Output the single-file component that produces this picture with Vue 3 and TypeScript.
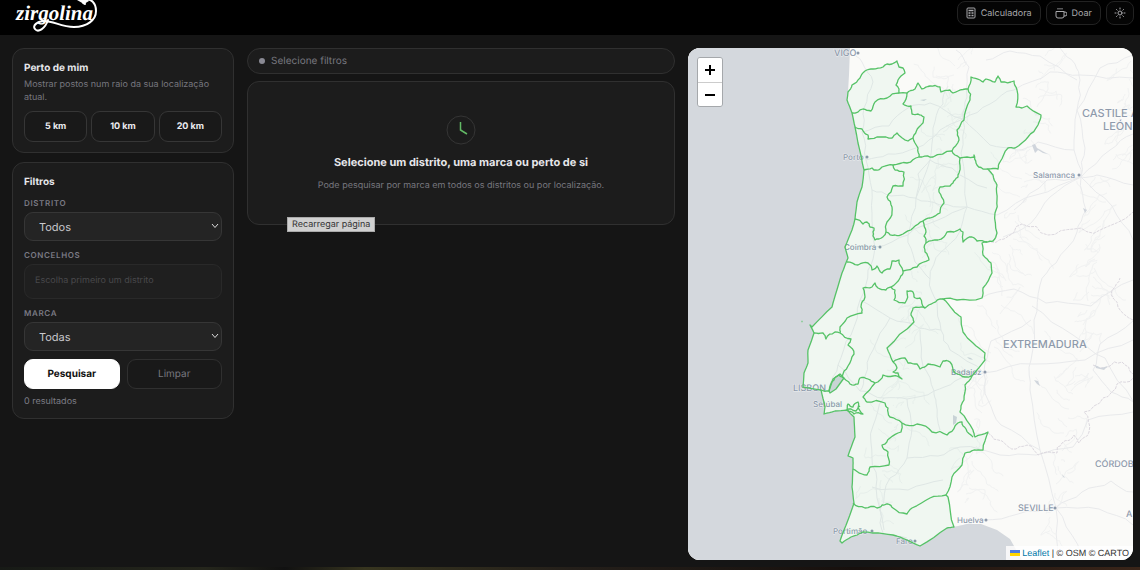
<script setup lang="ts">
import { ref } from 'vue'

type Point = [number, number]

const radii = [5, 10, 20]
const district = ref('Todos')
const brand = ref('Todas')

function parse(text: string): Point[] {
  return text.split(' ').map((pair) => pair.split(',').map(Number) as Point)
}

function noise(x: number, y: number): number {
  const value = Math.sin(x * 12.9898 + y * 78.233) * 43758.5453
  return value - Math.floor(value) - 0.5
}

// Midpoint displacement gives borders and roads a natural, irregular run.
function rough(text: string, amount: number, depth = 2): string {
  let points = parse(text)
  let size = amount
  for (let level = 0; level < depth; level++) {
    const next: Point[] = [points[0]]
    for (let i = 1; i < points.length; i++) {
      const [ax, ay] = points[i - 1]
      const [bx, by] = points[i]
      const length = Math.hypot(bx - ax, by - ay)
      if (length > 3) {
        const shift = noise(ax + bx, ay + by) * size * Math.min(length, 14) * 0.1
        next.push([
          (ax + bx) / 2 - ((by - ay) / length) * shift,
          (ay + by) / 2 + ((bx - ax) / length) * shift,
        ])
      }
      next.push([bx, by])
    }
    points = next
    size *= 0.8
  }
  return 'M' + points.map(([x, y]) => `${x.toFixed(1)} ${y.toFixed(1)}`).join('L')
}

const westCoast =
  '848,92 847,100 852,113 855,127 858,143 864,170 862,187 857,202 855,219 852,230 845,247 848,258 842,273 833,303 832,307 812,327 810,325 814,333 808,350 808,363 804,373 803,387 821,390 825,407 824,414 835,411 847,410 854,417 855,437 848,456 853,458 853,468 852,487 854,503 848,520 840,541 842,543'
const southCoast = '842,543 851,537 863,532 873,533 893,535 907,540 920,546 947,528 954,527'
const eastBorder =
  '954,527 948,497 946,495 952,477 962,465 965,453 974,450 983,450 988,432 975,437 973,430 960,412 964,400 965,385 972,376 985,360 985,353 973,343 963,332 961,317 953,310 943,299 957,300 982,298 983,288 992,273 991,263 983,255 982,243 987,242 993,241 997,233 995,213 997,200 997,185 993,175 988,169 998,169 1000,162 1008,148 1015,148 1028,137 1038,125 1041,115 1027,106 1022,108 1016,107 1017,90 1014,81 1001,82 998,76 995,82 986,79 983,82 980,80 971,77 968,89'
const northBorder =
  '968,89 958,91 953,93 950,90 941,92 940,87 930,86 922,89 918,83 915,89 907,93 899,93 899,89 896,85 898,80 901,76 905,73 903,68 899,67 897,61 892,64 887,64 883,67 873,69 865,71 860,78 852,85 848,92'

const landParts = [rough(westCoast, 0.4), rough(southCoast, 1), rough(eastBorder, 2), rough(northBorder, 2)]
const country = landParts.map((part, index) => (index ? part.replace('M', 'L') : part)).join('') + 'Z'
const ocean = `M688 48H850L849 75L848 92L${landParts[0].slice(1)}${landParts[1].replace('M', 'L')}L967 524L981 524L997 530L1010 539L1022 560H688Z`

const districtBorders = [
  '852,113 863,109 871,111 875,102 887,98 899,93',
  '855,127 862,129 868,135 868,139 880,137 892,138 897,133 908,141 913,138',
  '907,93 903,104 911,106 912,114 918,114 924,117 919,127 914,135 913,138 915,143 918,148 919,157',
  '864,170 872,168 874,170 880,169 882,167 893,165 907,163 919,157 922,157 933,157 952,151',
  '968,89 970,100 964,120 957,130 959,140 952,151 955,155 960,158 974,157 974,155 976,163 983,169 988,169',
  '960,158 959,173 955,180 953,183 950,186 940,187 939,192 944,203 940,213 930,218 923,221 926,232 924,236 926,243',
  '893,165 895,170 904,172 903,186 893,186 887,197 892,207 892,212 887,222 886,232',
  '923,221 913,228 903,234 895,235 886,232',
  '855,219 863,224 867,222 870,227 874,228 873,236 875,240 879,239 886,232',
  '926,243 938,240 947,232 960,229 963,232 963,242 972,237 977,241 987,242',
  '926,243 925,252 929,260 917,267 903,271 900,278 891,287',
  '847,262 858,265 868,263 872,270 877,266 882,273 890,269 892,261 899,260 903,271',
  '891,287 886,290 878,288 875,283 872,287 863,288 864,300 861,307 862,313 847,318 840,327 840,333',
  '814,333 823,333 826,339 835,332 840,333 851,339 848,345 854,354 848,366 842,377',
  '891,287 895,290 894,300 905,303 907,291 913,292 914,297 920,298 925,308 933,303 943,299',
  '925,308 913,308 911,315 914,322 887,348 893,362',
  '893,362 905,358 908,363 917,364 920,369 928,364 940,367 943,361 950,362 955,373 965,377 972,376',
  '821,390 829,391 834,380 839,375 842,377 850,384 858,384 860,378 868,379 875,383 883,375 893,376 902,379 898,373 893,372 897,368 893,362',
  '875,383 863,397 867,402 885,403 888,408 890,417 902,423',
  '902,423 917,424 932,432 947,435 955,426 962,422 966,429 973,437',
  '902,423 901,432 890,438 882,445 888,452 889,465 870,467 867,475 862,474 853,469',
  '853,503 865,508 877,508 882,505 888,504 893,508 907,514 912,508 930,498 946,495',
  '847,410 854,414 863,414 858,408 858,402 853,407 848,404 847,410 851,409 856,411 860,406',
].map((line) => rough(line, 3.2))

const roads = [
  '852,49 862,62 873,82 864,108 862,132 866,160 872,190 872,221 875,247 868,270 860,300 851,335 838,365 829,388',
  '866,160 888,154 916,148 940,130 963,119 990,104 1014,90 1050,72 1080,75 1133,78',
  '872,190 891,196 915,198 940,205 967,207 997,215 1036,195 1081,177 1110,150 1133,134',
  '1060,48 1075,64 1080,80 1077,110 1074,150 1081,177 1086,210 1077,232 1056,263 1040,285 1034,320 1031,360 1030,390 1040,450 1056,508 1058,560',
  '948,86 943,104 933,128 930,160 916,198 908,235 915,262 930,279 937,302 941,330 950,350 984,373 1033,364 1085,360 1133,340',
  '838,365 860,391 884,398 907,399 934,391 955,381 984,373',
  '907,399 912,428 907,458 890,478 880,510 884,535 907,538',
  '884,398 873,426 872,458 876,487 884,530',
  '907,458 938,456 960,447 1000,455 1036,455 1073,447 1088,420 1133,412',
  '954,527 984,520 1018,514 1056,508 1082,492 1111,481 1133,492',
  '956,50 969,67 967,97 963,119 961,153 967,207 959,233 941,252 930,279',
  '1133,55 1100,68 1077,110 1085,148 1081,177 1047,180 1014,210',
  '981,298 1014,289 1046,303 1091,306 1133,280',
  '1032,306 1073,335 1105,358 1133,401',
  '1040,450 1001,425 988,400 984,373 991,341 1031,320',
  '1056,508 1099,509 1133,525',
  '1056,508 1078,545 1086,560',
  '862,132 889,126 908,108 930,103 963,119',
  '875,247 908,235 938,220 967,207',
  '860,300 890,318 919,328 941,330',
  '872,487 908,490 943,480',
  '1081,177 1112,206 1133,240',
  '1074,150 1038,142 1016,150 990,145 963,119',
  '890,318 873,350 865,376 860,391',
  '916,198 918,174 930,160 952,168 987,188',
  '940,430 936,403 934,391 923,366 920,330',
  '986,60 1010,51 1040,56 1077,80',
  '1133,185 1097,175 1081,177 1050,197 1031,223 1003,237',
  '1133,321 1100,344 1093,370 1111,392 1133,402',
].map((line) => rough(line, 3))

const minorRoads = Array.from({ length: 200 }, (_, i) => {
  const x = 870 + ((i * 67) % 262)
  const y = 52 + ((i * 113) % 485)
  const dx = noise(i, 3) * 54
  const dy = noise(i, 8) * 54
  return { x, y, dx, dy }
})
  .filter(({ x, y }) => !(y > 505 && x < 1025) && !(x < 900 && (y < 60 || y > 500)))
  .map(({ x, y, dx, dy }) => rough(`${x},${y} ${x + dx},${y + dy} ${x + dx + dy / 2},${y + dy + dx / 2}`, 5, 3))

const provinces = [
  '988,433 1002,441 1016,449 1031,446 1038,455 1057,453 1062,443 1074,435 1079,443 1089,432 1084,412 1103,398 1117,384 1133,378',
  '1093,365 1108,367 1122,362 1133,374',
  '987,242 1004,239 1022,224 1048,235 1074,229 1100,230 1133,212',
  '1133,320 1118,307 1112,290 1120,278',
].map((line) => rough(line, 5))

const lakes = [
  'M1032 145l3-1 2 4 5 3 6 3-5-1-5-3-3 3z',
  'M1034 380l4 1 2 5-3-2z',
  'M1083 208l4 2-2 3z',
  'M953 415l4 2-1 6-3 2z',
  'M967 357l4 1 2 2-4-1z',
  'M1062 474l3 4-2-1z',
  'M920 100l7-1-3 2z',
  'M1095 365l6 3 7-2-4 4-8-2z',
]

const places = [
  { name: 'VIGO', x: 834, y: 56, size: 9, dot: 859 },
  { name: 'Porto', x: 843, y: 160, size: 8, dot: 868 },
  { name: 'Salamanca', x: 1033, y: 178, size: 8, dot: 1080 },
  { name: 'Coimbra', x: 844, y: 250, size: 8, dot: 881 },
  { name: 'EXTREMADURA', x: 1003, y: 348, size: 11, dot: 0 },
  { name: 'CASTILE A', x: 1082, y: 117, size: 11, dot: 0 },
  { name: 'LEÓN', x: 1103, y: 130, size: 11, dot: 0 },
  { name: 'Badajoz', x: 951, y: 375, size: 8, dot: 986 },
  { name: 'LISBON', x: 793, y: 391, size: 9, dot: 0 },
  { name: 'Setúbal', x: 813, y: 407, size: 8, dot: 0 },
  { name: 'CÓRDOB', x: 1095, y: 467, size: 9, dot: 0 },
  { name: 'SEVILLE', x: 1018, y: 511, size: 9, dot: 1056 },
  { name: 'Huelva', x: 957, y: 523, size: 8, dot: 987 },
  { name: 'A', x: 1126, y: 517, size: 9, dot: 0 },
  { name: 'Portimão', x: 833, y: 534, size: 8, dot: 873 },
  { name: 'Faro', x: 896, y: 544, size: 8, dot: 916 },
]
</script>

<template>
  <div class="page">
    <header class="topbar">
      <a class="logo" href="#" aria-label="zirgolina">
        <svg width="100" height="35" viewBox="0 0 100 35">
          <text x="6" y="20">zirgolina</text>
          <g fill="none" stroke="#fff" stroke-linecap="round">
            <path d="M35 21C27 21 22 26 25 29C28 33 35 29 38 20" stroke-width="2" />
            <path d="M32 21C43 20 50 27 64 27C77 27 86 20 86 11C86 3 81-2 75 0C72 1 72 3 75 4" stroke-width="2" />
          </g>
          <path d="M67 0L74 4L79 1L76-2Z" fill="#fff" />
        </svg>
      </a>
      <nav class="actions">
        <button type="button" class="action">
          <svg width="10" height="12" viewBox="0 0 10 12" fill="none" stroke="currentColor">
            <rect x="1" y="1" width="8" height="10" rx="1" />
            <path d="M2.500 3.500H7.500M2.500 6H4.500M5.500 6H7.500M2.500 8.500H4.500M5.500 8.500H7.500" stroke-width="1.500" />
          </svg>
          Calculadora
        </button>
        <button type="button" class="action">
          <svg width="12" height="12" viewBox="0 0 12 12" fill="none" stroke="currentColor">
            <path d="M1 4.500H9V9A2 2 0 0 1 7 11H3A2 2 0 0 1 1 9ZM9 5H10A1.500 1.500 0 0 1 10 9H9M3 1V2.500M5 1V2.500M7 1V2.500" />
          </svg>
          Doar
        </button>
        <button type="button" class="action round" aria-label="Tema">
          <svg width="12" height="12" viewBox="0 0 12 12" fill="none" stroke="currentColor" stroke-linecap="round">
            <circle cx="6" cy="6" r="2" />
            <path d="M6 1V2M6 10V11M1 6H2M10 6H11M2.500 2.500L3.200 3.200M8.800 8.800L9.500 9.500M9.500 2.500L8.800 3.200M3.200 8.800L2.500 9.500" />
          </svg>
        </button>
      </nav>
    </header>

    <main class="content">
      <aside class="sidebar">
        <section class="card">
          <h2>Perto de mim</h2>
          <p class="hint">Mostrar postos num raio da sua localização atual.</p>
          <div class="radii">
            <button v-for="radius in radii" :key="radius" type="button">{{ radius }} km</button>
          </div>
        </section>
        <form class="card filters" @submit.prevent>
          <h2>Filtros</h2>
          <label for="district">DISTRITO</label>
          <div class="select">
            <select id="district" v-model="district"><option>Todos</option></select>
            <svg width="8" height="6" viewBox="0 0 8 6"><path d="M1 1L4 4.500L7 1" fill="none" stroke="#ddd" /></svg>
          </div>
          <label for="council">CONCELHOS</label>
          <input id="council" type="text" placeholder="Escolha primeiro um distrito" disabled />
          <label for="brand">MARCA</label>
          <div class="select">
            <select id="brand" v-model="brand"><option>Todas</option></select>
            <svg width="8" height="6" viewBox="0 0 8 6"><path d="M1 1L4 4.500L7 1" fill="none" stroke="#ddd" /></svg>
          </div>
          <div class="buttons">
            <button type="submit" class="primary">Pesquisar</button>
            <button type="reset" class="secondary">Limpar</button>
          </div>
          <p class="count">0 resultados</p>
        </form>
      </aside>

      <section class="results">
        <div class="status"><span class="dot"></span>Selecione filtros</div>
        <div class="card empty">
          <svg width="30" height="30" viewBox="0 0 30 30" fill="none">
            <circle cx="15" cy="15" r="14" stroke="#353535" />
            <path d="M14.500 7V15L21 19" stroke="#62b965" stroke-width="1.500" />
          </svg>
          <h3>Selecione um distrito, uma marca ou perto de si</h3>
          <p>Pode pesquisar por marca em todos os distritos ou por localização.</p>
          <span class="tooltip" role="tooltip">Recarregar página</span>
        </div>
      </section>

      <section class="map" aria-label="Mapa">
        <svg class="tiles" viewBox="688 48 445 512" preserveAspectRatio="xMinYMin slice">
          <rect x="688" y="48" width="2000" height="2000" fill="#fafaf8" />
          <g fill="none" stroke="#f1f2f2"><path v-for="(d, i) in minorRoads" :key="i" :d="d" /></g>
          <g fill="none" stroke="#e9eaec"><path v-for="(d, i) in roads" :key="i" :d="d" /></g>
          <g fill="none" stroke="#dcd8df" stroke-dasharray="3 1"><path v-for="(d, i) in provinces" :key="i" :d="d" /></g>
          <path v-for="d in lakes" :key="d" :d="d" fill="#d0d5dc" />
          <path :d="ocean" fill="#d4d8dd" />
          <path d="M829 391L833 379L840 374L844 378L836 389L830 393Z" fill="#d0d6da" />
          <g class="places">
            <template v-for="place in places" :key="place.name">
              <text :x="place.x" :y="place.y" :font-size="place.size">{{ place.name }}</text>
              <circle v-if="place.dot" :cx="place.dot - 1" :cy="place.y - 3" r="1.500" />
            </template>
          </g>
          <path :d="country" fill="#22c55e" fill-opacity="0.045" stroke="#56c267" stroke-width="1.300" stroke-linejoin="round" />
          <g fill="none" stroke="#56c267" stroke-width="1.300" stroke-linejoin="round">
            <path v-for="(d, i) in districtBorders" :key="i" :d="d" />
            <path d="M829 391L833 379L840 374L844 378L836 389L830 393Z" />
            <path d="M801.500 321.500h1" />
          </g>
        </svg>
        <div class="zoom">
          <button type="button" aria-label="Aproximar">
            <svg width="12" height="12" viewBox="0 0 12 12"><path d="M1 6H11M6 1V11" stroke="#000" stroke-width="2" /></svg>
          </button>
          <button type="button" aria-label="Afastar">
            <svg width="12" height="12" viewBox="0 0 12 12"><path d="M1 6H11" stroke="#000" stroke-width="2" /></svg>
          </button>
        </div>
        <div class="attribution">
          <svg width="10" height="6" viewBox="0 0 10 6"><path d="M0 0H10V3H0Z" fill="#4c7be1" /><path d="M0 3H10V6H0Z" fill="#ffd500" /></svg>
          <a href="#">Leaflet</a> | © OSM © CARTO
        </div>
      </section>
    </main>
    <footer class="edge"></footer>
  </div>
</template>

<style>
body {
  margin: 0;
  background: #151515;
}
</style>

<style scoped>
.page {
  display: flex;
  flex-direction: column;
  min-height: 100vh;
  background: #151515;
  color: #e6e6ea;
  font-family: Inter, "Liberation Sans", sans-serif;
  font-size: 9px;
  text-rendering: geometricPrecision;
}
* {
  box-sizing: border-box;
}
button,
input,
select {
  margin: 0;
  font-family: inherit;
  text-rendering: inherit;
}
h2,
h3,
p {
  margin: 0;
}
.topbar {
  display: flex;
  justify-content: space-between;
  align-items: flex-start;
  height: 35px;
  padding: 0 6px 0 10px;
  background: #000;
}
.logo text {
  fill: #fff;
  font: italic bold 21px "Liberation Serif", serif;
}
.actions {
  display: flex;
  gap: 5px;
  padding-top: 1px;
}
.action {
  display: flex;
  align-items: center;
  gap: 5px;
  height: 24px;
  padding: 0 8px;
  border: 1px solid #222;
  border-radius: 8px;
  background: #050505;
  color: #a9a9ac;
  font-size: 9px;
}
.action.round {
  padding: 0 7px;
}
.content {
  flex: 1;
  display: grid;
  grid-template-columns: 222px minmax(0, 428fr) minmax(0, 445fr);
  gap: 13px;
  padding: 13px 7px 7px 12px;
}
.sidebar {
  display: flex;
  flex-direction: column;
  gap: 9px;
}
.card {
  border: 1px solid #303030;
  border-radius: 12px;
  background: #1c1c1c;
}
.sidebar .card {
  padding: 12px 11px 10px;
}
h2 {
  font-size: 10px;
  line-height: 14px;
  font-weight: 700;
}
.hint {
  margin-top: 3px;
  color: #77777f;
  line-height: 13px;
}
.radii {
  display: flex;
  gap: 4px;
  margin-top: 7px;
}
.radii button {
  flex: 1;
  height: 31px;
  padding: 0;
  border: 1px solid #363636;
  border-radius: 9px;
  background: #191919;
  color: #ececf0;
  font-size: 9px;
  font-weight: 700;
}
.filters {
  display: flex;
  flex-direction: column;
}
.filters label {
  margin: 9px 0 4px;
  color: #7b7b85;
  font-size: 8px;
  line-height: 10px;
  font-weight: 600;
  letter-spacing: 0.08em;
}
.select {
  position: relative;
  display: flex;
}
.select svg {
  position: absolute;
  right: 3px;
  top: 11px;
  pointer-events: none;
}
select {
  appearance: none;
  flex: 1;
  height: 29px;
  padding: 0 14px;
  border: 1px solid #363636;
  border-radius: 9px;
  background: #242424;
  color: #c9c9cd;
  font-size: 11px;
}
input {
  height: 35px;
  padding: 0 10px 3px;
  border: 1px solid #292929;
  border-radius: 9px;
  background: #1f1f1f;
  font-size: 9px;
}
input::placeholder {
  color: #48484b;
}
.buttons {
  display: flex;
  gap: 7px;
  margin-top: 8px;
}
.buttons button {
  flex: 1;
  height: 30px;
  border: 1px solid #303030;
  border-radius: 9px;
  background: #191919;
  color: #77777f;
  font-size: 10px;
}
.buttons .primary {
  border-color: #fff;
  background: #fff;
  color: #111;
  font-weight: 700;
}
.count {
  margin-top: 7px;
  color: #7d7d86;
  line-height: 12px;
}
.results {
  display: flex;
  flex-direction: column;
  gap: 7px;
}
.status {
  display: flex;
  align-items: center;
  gap: 6px;
  height: 26px;
  padding: 0 11px;
  border: 1px solid #303030;
  border-radius: 13px;
  background: #1c1c1c;
  color: #77777f;
  font-size: 10px;
}
.dot {
  width: 6px;
  height: 6px;
  border-radius: 50%;
  background: #8a8a94;
}
.empty {
  position: relative;
  display: flex;
  flex-direction: column;
  align-items: center;
  padding: 33px 20px 31px;
  text-align: center;
}
h3 {
  margin-top: 9px;
  font-size: 11px;
  line-height: 16px;
  font-weight: 700;
}
.empty p {
  margin-top: 9px;
  color: #77777f;
  font-size: 9px;
  line-height: 14px;
}
.tooltip {
  position: absolute;
  left: 39px;
  bottom: -8px;
  padding: 0 4px;
  border: 1px solid #aaa;
  background: #d0d0d0;
  color: #333;
  font-size: 9px;
  line-height: 13px;
}
.map {
  position: relative;
  overflow: hidden;
  border-radius: 12px;
  background: #fafaf8;
}
.tiles {
  position: absolute;
  inset: 0;
  width: 100%;
  height: 100%;
}
.places {
  fill: #8e9aab;
  font-family: Inter, "Liberation Sans", sans-serif;
  font-weight: 500;
}
.places text {
  paint-order: stroke;
  stroke: #fff;
  stroke-opacity: 0.6;
  stroke-width: 1px;
}
.zoom {
  position: absolute;
  top: 9px;
  left: 9px;
  overflow: hidden;
  border: 1px solid #a5a8ab;
  border-radius: 3px;
}
.zoom button {
  display: flex;
  align-items: center;
  justify-content: center;
  width: 24px;
  height: 24px;
  padding: 0;
  border: 0;
  background: #fff;
}
.zoom button + button {
  border-top: 1px solid #ccc;
}
.attribution {
  position: absolute;
  right: 0;
  bottom: 0;
  padding: 0 4px;
  background: rgba(255, 255, 255, 0.8);
  color: #333;
  font: 9px/14px "Liberation Sans", sans-serif;
}
.attribution svg {
  margin-right: 2px;
}
.attribution a {
  color: #0078a8;
  text-decoration: none;
}
.edge {
  height: 3px;
  background: linear-gradient(90deg, #171a16, #25261c 18%, #111 25%, #37351f 32%, #241f1a 50%, #17100d 75%, #3a2519);
}
</style>
